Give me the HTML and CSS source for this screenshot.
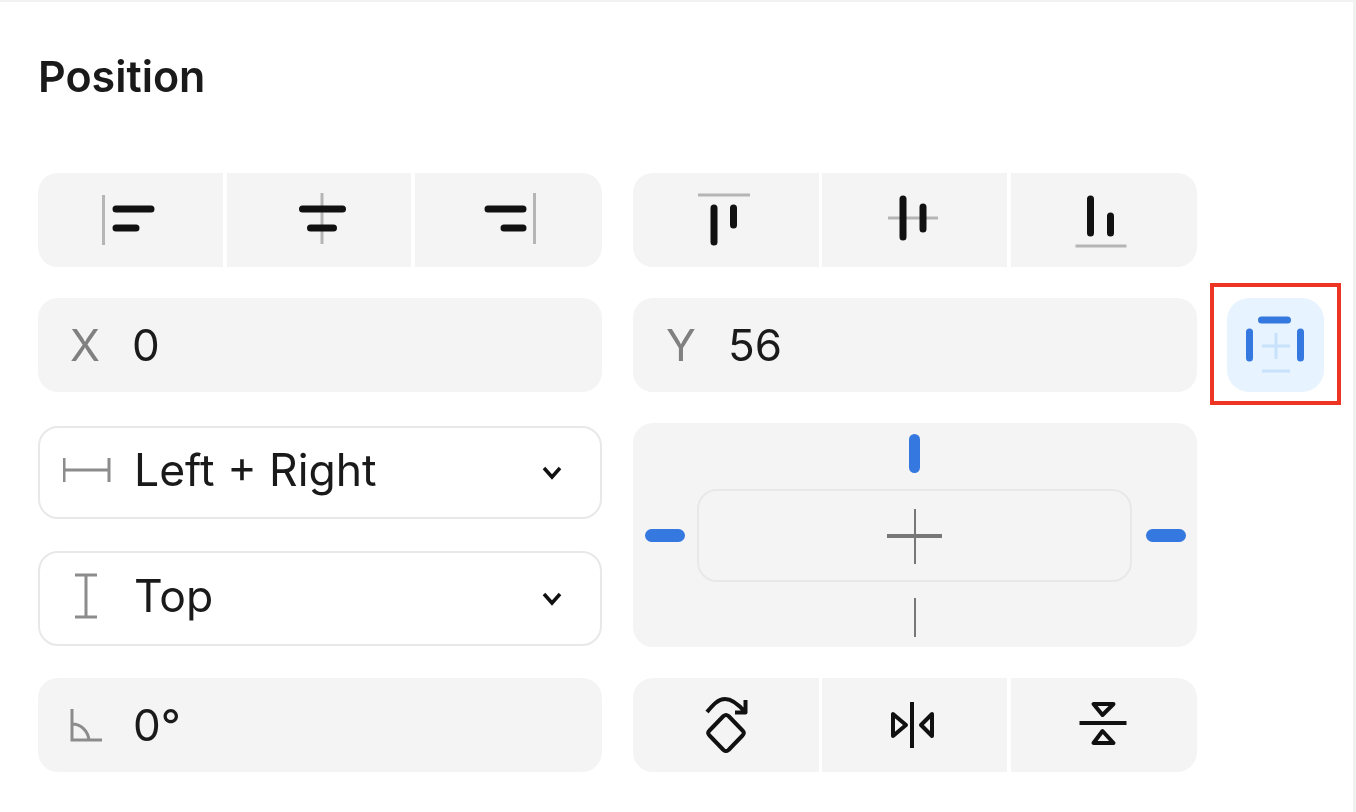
FILE: index.html
```html
<!DOCTYPE html>
<html lang="en">
<head>
  <meta charset="UTF-8">
  <meta name="viewport" content="width=device-width, initial-scale=1.0">
  <title>Position</title>
  <link rel="stylesheet" href="styles.css">
</head>
<body>
  <div class="panel">
    <h1 class="title">Position</h1>

    <div class="grid">
      <!-- align horizontal -->
      <div class="seg-group seg-left">
        <button class="seg">
          <svg class="icon" viewBox="-30 -30 60 60"><path class="guide" d="M-27.5 -25V25"/><path class="bar" d="M-15 -11H20M-15 8H5"/></svg>
        </button>
        <button class="seg">
          <svg class="icon" viewBox="-30 -30 60 60"><path class="guide" d="M3 -27V24"/><path class="bar" d="M-16.500 -11H23.500M-8.500 8H14.500"/></svg>
        </button>
        <button class="seg">
          <svg class="icon" viewBox="-30 -30 60 60"><path class="guide" d="M25.500 -27V24"/><path class="bar" d="M-21 -11H14M-5 8H14"/></svg>
        </button>
      </div>

      <!-- align vertical -->
      <div class="seg-group seg-right">
        <button class="seg">
          <svg class="icon" viewBox="-30 -30 60 60"><path class="guide" d="M-28 -25H24"/><path class="bar" d="M-12 -12V22M7.500 -12V5"/></svg>
        </button>
        <button class="seg">
          <svg class="icon" viewBox="-30 -30 60 60"><path class="guide" d="M-27 -2H23"/><path class="bar" d="M-12 -21V17M8 -13V9"/></svg>
        </button>
        <button class="seg">
          <svg class="icon" viewBox="-30 -30 60 60"><path class="guide" d="M-28.500 26H22.500"/><path class="bar" d="M-13.500 -21V13M6.500 -4V13"/></svg>
        </button>
      </div>

      <div class="spacer"></div>

      <div class="field">
        <span class="field-label">X</span>
        <span class="field-value">0</span>
      </div>

      <div class="field field-y">
        <span class="field-label">Y</span>
        <span class="field-value">56</span>
      </div>

      <div class="pin">
        <svg class="pin-icon" viewBox="-40 -40 80 80">
          <path class="pin-off" d="M-14 1H14M0 -12V14M-14 26H14"/>
          <path class="pin-on" d="M-14.500 -25H11.500M-26.500 -13V13M24.500 -13V13"/>
        </svg>
      </div>

      <div class="selects">
        <div class="select select-first">
          <svg class="select-icon" width="50" height="30" viewBox="0 0 50 30"><path d="M1 3V27M46 3V27M1 15H46"/></svg>
          <span class="select-text">Left + Right</span>
          <svg class="chevron" width="24" height="16" viewBox="0 0 24 16"><path d="M4 3L12 12L20 3"/></svg>
        </div>
        <div class="select select-second">
          <svg class="select-icon" width="50" height="48" viewBox="0 0 50 48"><path d="M12 3H34M12 45H34M23 3V45"/></svg>
          <span class="select-text">Top</span>
          <svg class="chevron" width="24" height="16" viewBox="0 0 24 16"><path d="M4 3L12 12L20 3"/></svg>
        </div>
      </div>

      <!-- constraint picker -->
      <div class="pad">
        <span></span>
        <span class="tick-v tick-top"></span>
        <span></span>
        <span class="tick-h"></span>
        <div class="pad-box">
          <svg class="cross" width="60" height="60" viewBox="-30 -30 60 60"><path class="cross-h" d="M-28 0H27"/><path class="cross-v" d="M0 -27V28"/></svg>
        </div>
        <span class="tick-h tick-right"></span>
        <span></span>
        <span class="tick-line"></span>
        <span></span>
      </div>

      <div class="spacer"></div>

      <div class="field">
        <svg class="angle" width="36" height="36" viewBox="0 0 36 36"><path d="M3 2V33H33M3 17C12 17 19 24 20 33"/></svg>
        <span class="field-value">0°</span>
      </div>

      <!-- rotate and flip -->
      <div class="seg-group seg-bottom">
        <button class="seg">
          <svg class="icon" viewBox="-30 -30 60 60">
            <path class="line" d="M-19 -13C-13 -20 -8 -26 -1 -26C6 -26 13 -20 19 -13M19.500 -25V-12.500H9"/>
            <path class="line" d="M-2.500 -9L-16.500 5.500Q-19 8 -16.500 10.500L-2.500 25Q0 27 2.500 25L16.500 10.500Q19 8 16.500 5.500L2.500 -9Q0 -11 -2.500 -9Z"/>
          </svg>
        </button>
        <button class="seg">
          <svg class="icon" viewBox="-30 -30 60 60">
            <path class="line" d="M-3 -23V23M-22 -11V11L-9 0ZM17 -11V11L6 0Z"/>
          </svg>
        </button>
        <button class="seg">
          <svg class="icon" viewBox="-30 -30 60 60">
            <path class="line" d="M-24.500 -2H22.500M-10.500 -21H9.500L-1.500 -10ZM-10.500 18H9.500L-1.500 6Z"/>
          </svg>
        </button>
      </div>

      <div class="spacer"></div>
    </div>
  </div>
</body>
</html>
```

FILE: styles.css
```css
* {
  box-sizing: border-box;
}
body {
  margin: 0;
  background: white;
  font-family: Inter, "Noto Sans", sans-serif;
  color: #1a1a1a;
}
.panel {
  height: 812px;
  overflow: hidden;
  padding: 0 0 0 38px;
  border-top: 2px solid #f1f1f1;
  border-right: 3px solid #f1f1f1;
  filter: blur(0.6px);
}
.title {
  margin: 0;
  height: 171px;
  padding-top: 49px;
  font-size: 43px;
  line-height: 50px;
  font-weight: 600;
}
.grid {
  display: grid;
  grid-template-columns: 564px 564px 97px;
  grid-template-rows: 94px 94px 224px 94px;
  column-gap: 31px;
  row-gap: 31px;
}
.spacer {
  min-width: 0;
}

/* segmented buttons */
.seg-group {
  display: flex;
  gap: 3px;
  border-radius: 20px;
  overflow: hidden;
}
.seg-left {
  display: grid;
  grid-template-columns: 185px 184px 1fr;
  gap: 4px;
}
.seg-right .seg:last-child, .seg-bottom .seg:last-child {
  margin-left: 1px;
}
.seg {
  flex: 1;
  display: flex;
  align-items: center;
  justify-content: center;
  padding: 0;
  border: none;
  background: #f4f4f4;
}
.icon {
  width: 60px;
  height: 60px;
  fill: none;
  stroke-linecap: round;
}
.guide {
  stroke: #b5b5b5;
  stroke-width: 3;
  stroke-linecap: butt;
}
.bar {
  stroke: #111;
  stroke-width: 7;
}
.line {
  stroke: #111;
  stroke-width: 4;
  stroke-linecap: butt;
  stroke-linejoin: round;
}

/* value fields */
.field {
  display: flex;
  align-items: center;
  padding-left: 32px;
  border-radius: 20px;
  background: #f4f4f4;
  font-size: 44px;
}
.field-label {
  width: 62px;
  color: #808080;
}
.field-y {
  padding-left: 33px;
}
.field .angle {
  flex: none;
  margin-left: -1px;
  margin-right: 28px;
  fill: none;
  stroke: #8c8c8c;
  stroke-width: 3;
}

/* pin toggle */
.pin {
  position: relative;
  display: flex;
  align-items: center;
  justify-content: center;
  margin-left: -1px;
  margin-right: 1px;
  border-radius: 22px;
  background: #e7f3fe;
}
.pin::after {
  content: "";
  position: absolute;
  top: -15px;
  bottom: -13px;
  left: -17px;
  right: -17px;
  border: 4px solid #ee3524;
}
.pin-icon {
  width: 80px;
  height: 80px;
  fill: none;
  stroke-linecap: round;
}
.pin-on {
  stroke: #3478e0;
  stroke-width: 7;
}
.pin-off {
  stroke: #c9e2fb;
  stroke-width: 3;
  stroke-linecap: butt;
}

/* dropdowns */
.selects {
  display: flex;
  flex-direction: column;
  gap: 32px;
  padding-top: 3px;
}
.select {
  display: flex;
  align-items: center;
  padding: 0 36px 0 23px;
  border: 2px solid #e8e8e8;
  border-radius: 20px;
}
.select-first {
  height: 93px;
}
.select-second {
  height: 95px;
}
.select-icon {
  flex: none;
  margin-top: -5px;
  margin-right: 22px;
  fill: none;
  stroke: #8c8c8c;
  stroke-width: 3;
}
.select-text {
  flex: 1;
  margin-top: -5px;
  margin-left: -1px;
  font-size: 44.500px;
}
.chevron {
  flex: none;
  fill: none;
  stroke: #111;
  stroke-width: 3.5;
}

/* constraint pad */
.pad {
  display: grid;
  grid-template-columns: 64px 1fr 65px;
  grid-template-rows: 66px 93px 1fr;
  place-items: center;
  border-radius: 20px;
  background: #f4f4f4;
}
.pad-box {
  display: flex;
  align-items: center;
  justify-content: center;
  width: 100%;
  height: 100%;
  border: 2px solid #e8e8e8;
  border-radius: 20px;
}
.tick-v {
  width: 11px;
  height: 39px;
  border-radius: 6px;
  background: #3478e0;
}
.tick-top {
  align-self: start;
  margin-top: 11px;
}
.tick-h {
  width: 40px;
  height: 13px;
  border-radius: 7px;
  background: #3478e0;
}
.tick-right {
  margin-left: 3px;
}
.tick-line {
  align-self: end;
  width: 2px;
  height: 39px;
  margin-bottom: 10px;
  background: #777;
}
.cross {
  fill: none;
  stroke: #777;
}
.cross-h {
  stroke-width: 4;
}
.cross-v {
  stroke-width: 2;
}
```
